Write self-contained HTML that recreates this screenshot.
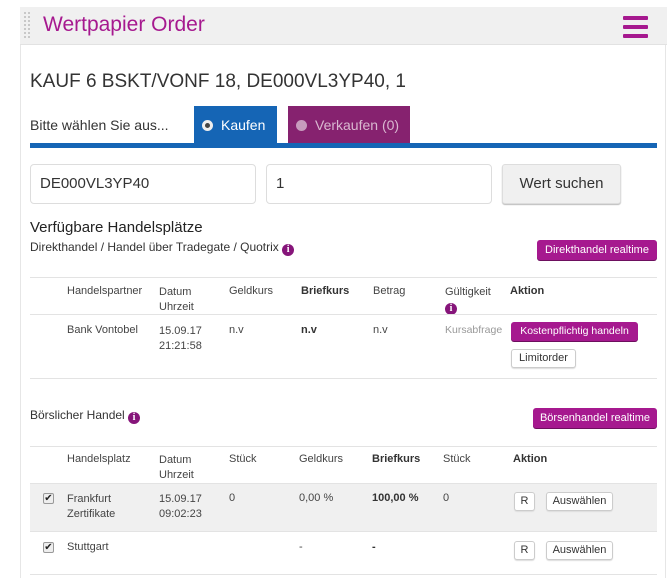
<!DOCTYPE html>
<html><head><meta charset="utf-8"><style>
*{margin:0;padding:0;box-sizing:border-box}
body{width:667px;height:578px;background:#fff;position:relative;overflow:hidden;font-family:"Liberation Sans",sans-serif;color:#444;font-size:11px}
.a{position:absolute;white-space:nowrap}
.hdr{left:20px;top:7px;width:647px;height:38px;background:#f0f0f0;border-bottom:1px solid #e2e2e2}
.vl{left:20px;top:45px;width:1px;height:533px;background:#e6e6e6}
.vr{left:665px;top:45px;width:1px;height:533px;background:#e6e6e6}
.line{height:1px;background:#e3e3e3;left:30px;width:627px}
.btn{border-radius:3px;color:#fff;background:#a6198f;font-size:11px;text-align:center;line-height:20px;box-shadow:0 1px 0 #6d0f5e}
.wb{border:1px solid #ccc;border-radius:3px;background:#fff;color:#333;font-size:11px;text-align:center;line-height:17px;box-shadow:0 1px 1px #ddd}
.inp{border:1px solid #ddd;border-radius:4px;height:40px;font-size:15px;color:#333;padding-left:9px;line-height:38px}
.cb{width:11px;height:11px;border:1px solid #999;border-radius:2px;background:#eee;font-size:10px;line-height:9px;text-align:center;color:#222}
b{color:#333}
.i{display:inline-block;width:12px;height:12px;border-radius:50%;background:#86157a;color:#fff;font-size:10px;font-weight:bold;text-align:center;line-height:12px;font-family:"Liberation Serif",serif;vertical-align:-1px}
</style></head><body>
<div class="a hdr"></div>
<svg class="a" style="left:24px;top:12px" width="9" height="30"><g fill="#c8c8c8"><rect x="0" y="0" width="2" height="2"/><rect x="4" y="0" width="2" height="2"/><rect x="0" y="4" width="2" height="2"/><rect x="4" y="4" width="2" height="2"/><rect x="0" y="8" width="2" height="2"/><rect x="4" y="8" width="2" height="2"/><rect x="0" y="12" width="2" height="2"/><rect x="4" y="12" width="2" height="2"/><rect x="0" y="16" width="2" height="2"/><rect x="4" y="16" width="2" height="2"/><rect x="0" y="20" width="2" height="2"/><rect x="4" y="20" width="2" height="2"/><rect x="0" y="24" width="2" height="2"/><rect x="4" y="24" width="2" height="2"/></g></svg>
<div class="a" style="left:43px;top:13px;font-size:21px;color:#a6198f">Wertpapier Order</div>
<svg class="a" style="left:623px;top:16px" width="26" height="22"><g fill="#a6198f"><rect y="0" width="25" height="4" rx="1"/><rect y="9" width="25" height="4" rx="1"/><rect y="18" width="25" height="4" rx="1"/></g></svg>
<div class="a vl"></div><div class="a vr"></div>
<div class="a" style="left:30px;top:71px;font-size:19px;color:#333">KAUF 6 BSKT/VONF 18, DE000VL3YP40, 1</div>
<div class="a" style="left:30px;top:117px;font-size:14px;color:#333">Bitte wählen Sie aus...</div>
<div class="a" style="left:194px;top:106px;width:83px;height:38px;background:#1565b5;color:#fff;font-size:14px;line-height:38px;padding-left:8px"><span style="display:inline-block;width:11px;height:11px;border-radius:50%;border:3px solid #eee;vertical-align:-1px;margin-right:8px;background:#444"></span>Kaufen</div>
<div class="a" style="left:288px;top:106px;width:122px;height:38px;background:#86226f;color:#d9b8d0;font-size:14px;line-height:38px;padding-left:8px"><span style="display:inline-block;width:11px;height:11px;border-radius:50%;background:#c79bbd;vertical-align:-1px;margin-right:8px"></span>Verkaufen (0)</div>
<div class="a" style="left:30px;top:143px;width:627px;height:5px;background:#1565b5"></div>
<div class="a inp" style="left:30px;top:164px;width:226px">DE000VL3YP40</div>
<div class="a inp" style="left:266px;top:164px;width:226px">1</div>
<div class="a" style="left:502px;top:164px;width:119px;height:40px;background:#f0f0f0;border:1px solid #ddd;border-radius:3px;box-shadow:0 1px 1px #bbb;font-size:15px;color:#333;text-align:center;line-height:38px">Wert suchen</div>
<div class="a" style="left:30px;top:219px;font-size:15px;color:#222">Verfügbare Handelsplätze</div>
<div class="a" style="left:30px;top:240px;font-size:12px;color:#333">Direkthandel / Handel über Tradegate / Quotrix <span class="i">i</span></div>
<div class="a btn" style="left:537px;top:240px;width:120px">Direkthandel realtime</div>
<div class="a line" style="top:277px"></div>
<div class="a" style="left:67px;top:285px">Handelspartner</div>
<div class="a" style="left:159px;top:285px;line-height:15px">Datum<br>Uhrzeit</div>
<div class="a" style="left:229px;top:285px">Geldkurs</div>
<div class="a" style="left:301px;top:285px"><b>Briefkurs</b></div>
<div class="a" style="left:373px;top:285px">Betrag</div>
<div class="a" style="left:445px;top:285px;line-height:15px">Gültigkeit<br><span class="i">i</span></div>
<div class="a" style="left:510px;top:285px"><b>Aktion</b></div>
<div class="a line" style="top:314px"></div>
<div class="a" style="left:67px;top:324px">Bank Vontobel</div>
<div class="a" style="left:159px;top:324px;line-height:15px">15.09.17<br>21:21:58</div>
<div class="a" style="left:229px;top:324px">n.v</div>
<div class="a" style="left:301px;top:324px"><b>n.v</b></div>
<div class="a" style="left:373px;top:324px">n.v</div>
<div class="a" style="left:445px;top:324px;color:#999;font-size:10.5px">Kursabfrage</div>
<div class="a btn" style="left:511px;top:322px;width:127px;height:19px;line-height:19px;font-size:10.5px">Kostenpflichtig handeln</div>
<div class="a wb" style="left:511px;top:349px;width:65px;height:19px">Limitorder</div>
<div class="a line" style="top:378px"></div>
<div class="a" style="left:30px;top:408px;font-size:12px;color:#333">Börslicher Handel <span class="i">i</span></div>
<div class="a btn" style="left:533px;top:408px;width:124px">Börsenhandel realtime</div>
<div class="a line" style="top:446px"></div>
<div class="a" style="left:67px;top:453px">Handelsplatz</div>
<div class="a" style="left:159px;top:453px;line-height:15px">Datum<br>Uhrzeit</div>
<div class="a" style="left:229px;top:453px">Stück</div>
<div class="a" style="left:299px;top:453px">Geldkurs</div>
<div class="a" style="left:372px;top:453px"><b>Briefkurs</b></div>
<div class="a" style="left:443px;top:453px">Stück</div>
<div class="a" style="left:513px;top:453px"><b>Aktion</b></div>
<div class="a" style="left:30px;top:483px;width:627px;height:49px;background:#f0f0f0;border-top:1px solid #e3e3e3;border-bottom:1px solid #e3e3e3"></div>
<div class="a cb" style="left:43px;top:493px">✔</div>
<div class="a" style="left:67px;top:492px;line-height:15px">Frankfurt<br>Zertifikate</div>
<div class="a" style="left:159px;top:492px;line-height:15px">15.09.17<br>09:02:23</div>
<div class="a" style="left:229px;top:492px">0</div>
<div class="a" style="left:299px;top:492px">0,00 %</div>
<div class="a" style="left:372px;top:492px"><b>100,00 %</b></div>
<div class="a" style="left:443px;top:492px">0</div>
<div class="a wb" style="left:514px;top:492px;width:21px;height:19px">R</div>
<div class="a wb" style="left:546px;top:492px;width:67px;height:19px">Auswählen</div>
<div class="a cb" style="left:43px;top:542px">✔</div>
<div class="a" style="left:67px;top:541px">Stuttgart</div>
<div class="a" style="left:299px;top:541px">-</div>
<div class="a" style="left:372px;top:541px"><b>-</b></div>
<div class="a wb" style="left:514px;top:541px;width:21px;height:19px">R</div>
<div class="a wb" style="left:546px;top:541px;width:67px;height:19px">Auswählen</div>
<div class="a line" style="top:574px"></div>
</body></html>
